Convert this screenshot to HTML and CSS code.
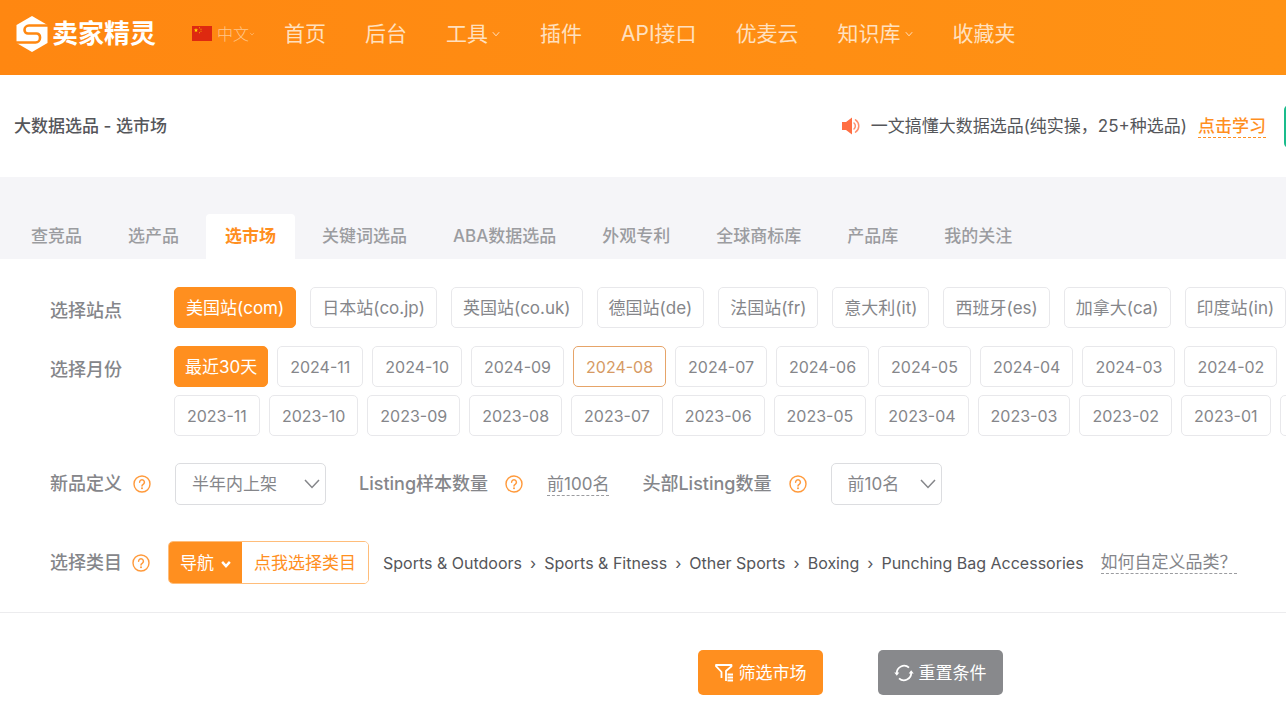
FILE: index.html
```html
<!DOCTYPE html>
<html lang="zh-CN">
<head>
    <meta charset="UTF-8">
    <meta name="viewport" content="width=device-width, initial-scale=1.0">
    <title>选市场 - 卖家精灵</title>
    <link rel="stylesheet" href="styles.css">
</head>
<body>
    <svg class="sprite" aria-hidden="true">
        <symbol id="help" viewBox="0 0 18 18">
            <circle cx="9" cy="9" r="8" fill="none" stroke="currentColor" stroke-width="1.4"/>
            <path d="M6.6 7.2a2.4 2.4 0 1 1 3.6 2.1c-.8.5-1.2.8-1.2 1.7" fill="none" stroke="currentColor" stroke-width="1.5" stroke-linecap="round"/>
            <circle cx="9" cy="13.2" r="1" fill="currentColor"/>
        </symbol>
        <symbol id="caret" viewBox="0 0 10 10">
            <path d="M1.8 3.2L5 6.8l3.2-3.6" fill="none" stroke="currentColor"/>
        </symbol>
        <symbol id="chevron" viewBox="0 0 16 10">
            <path d="M1 1l7 7.5L15 1" fill="none" stroke="currentColor" stroke-width="1.5"/>
        </symbol>
    </svg>

    <header class="header">
        <a class="logo" href="#">
            <svg class="logo-mark" viewBox="0 0 32 36" aria-hidden="true">
                <path d="M16 0L31.5 9v18L16 36 .5 27V9z" fill="#fff"/>
                <path d="M32 9.5H13A4.500 4.500 0 0 0 8.500 14A3.500 3.500 0 0 0 12 17.500H20.500A3.500 3.500 0 0 1 24 21v1A4.500 4.500 0 0 1 19.500 26.500H0" fill="none" stroke="#ff8811" stroke-width="2.6"/>
            </svg>
            <span class="logo-text">卖家精灵</span>
        </a>
        <button class="lang" type="button">
            <svg class="flag" viewBox="0 0 20 15" aria-hidden="true">
                <rect width="20" height="15" fill="#de2910"/>
                <path d="M4 2l.6 1.400 1.500.1-1.200 1 .4 1.500L4 5.200 2.700 6l.4-1.500-1.200-1 1.500-.1z" fill="#ffde00"/>
                <path d="M7 1.200h1v1H7zM8.500 2.800h1v1h-1zM8.500 4.800h1v1h-1zM7 6.200h1v1H7z" fill="#f5a800"/>
            </svg>
            <span>中文</span>
            <svg class="lang-caret" aria-hidden="true"><use href="#caret"/></svg>
        </button>
        <nav class="nav">
            <a href="#">首页</a>
            <a href="#">后台</a>
            <a href="#">工具<svg class="nav-caret" aria-hidden="true"><use href="#caret"/></svg></a>
            <a href="#">插件</a>
            <a href="#">API接口</a>
            <a href="#">优麦云</a>
            <a href="#">知识库<svg class="nav-caret" aria-hidden="true"><use href="#caret"/></svg></a>
            <a href="#">收藏夹</a>
        </nav>
    </header>

    <section class="title-bar">
        <h1>大数据选品 - 选市场</h1>
        <div class="notice">
            <svg class="speaker" viewBox="0 0 20 18" aria-hidden="true">
                <path d="M1 5h4l6-4.500v17L5 13H1z" fill="#ff6f43"/>
                <path d="M13 6a4 4 0 0 1 0 6M14.500 2.800a7.500 7.500 0 0 1 0 12.400" fill="none" stroke="#ff8f6c" stroke-width="1.5" stroke-linecap="round"/>
            </svg>
            <span>一文搞懂大数据选品(纯实操，25+种选品)</span>
            <a class="learn" href="#">点击学习</a>
        </div>
        <button class="side-btn" type="button" aria-label="教程"></button>
    </section>

    <nav class="tabs">
        <a href="#">查竞品</a>
        <a href="#">选产品</a>
        <a class="active" href="#">选市场</a>
        <a href="#">关键词选品</a>
        <a href="#">ABA数据选品</a>
        <a href="#">外观专利</a>
        <a href="#">全球商标库</a>
        <a href="#">产品库</a>
        <a href="#">我的关注</a>
    </nav>

    <main class="filters">
        <div class="row">
            <span class="label">选择站点</span>
            <div class="chips sites">
                <button class="chip selected" type="button">美国站(com)</button>
                <button class="chip" type="button">日本站(co.jp)</button>
                <button class="chip" type="button">英国站(co.uk)</button>
                <button class="chip" type="button">德国站(de)</button>
                <button class="chip" type="button">法国站(fr)</button>
                <button class="chip" type="button">意大利(it)</button>
                <button class="chip" type="button">西班牙(es)</button>
                <button class="chip" type="button">加拿大(ca)</button>
                <button class="chip" type="button">印度站(in)</button>
            </div>
        </div>
        <div class="row months">
            <span class="label">选择月份</span>
            <div class="month-list">
                <div class="chips">
                    <button class="chip selected" type="button">最近30天</button>
                    <button class="chip" type="button">2024-11</button>
                    <button class="chip" type="button">2024-10</button>
                    <button class="chip" type="button">2024-09</button>
                    <button class="chip hovered" type="button">2024-08</button>
                    <button class="chip" type="button">2024-07</button>
                    <button class="chip" type="button">2024-06</button>
                    <button class="chip" type="button">2024-05</button>
                    <button class="chip" type="button">2024-04</button>
                    <button class="chip" type="button">2024-03</button>
                    <button class="chip" type="button">2024-02</button>
                    <button class="chip" type="button">2024-01</button>
                </div>
                <div class="chips">
                    <button class="chip" type="button">2023-11</button>
                    <button class="chip" type="button">2023-10</button>
                    <button class="chip" type="button">2023-09</button>
                    <button class="chip" type="button">2023-08</button>
                    <button class="chip" type="button">2023-07</button>
                    <button class="chip" type="button">2023-06</button>
                    <button class="chip" type="button">2023-05</button>
                    <button class="chip" type="button">2023-04</button>
                    <button class="chip" type="button">2023-03</button>
                    <button class="chip" type="button">2023-02</button>
                    <button class="chip" type="button">2023-01</button>
                    <button class="chip" type="button">2022-12</button>
                </div>
            </div>
        </div>

        <div class="options">
            <div class="option">
                <label for="newItem">新品定义</label>
                <svg class="help" aria-hidden="true"><use href="#help"/></svg>
                <div class="select wide">
                    <select id="newItem"><option>半年内上架</option></select>
                    <svg aria-hidden="true"><use href="#chevron"/></svg>
                </div>
            </div>
            <div class="option sample">
                <span>Listing样本数量</span>
                <svg class="help" aria-hidden="true"><use href="#help"/></svg>
                <a class="dashed" href="#">前100名</a>
            </div>
            <div class="option head">
                <label for="headCount">头部Listing数量</label>
                <svg class="help" aria-hidden="true"><use href="#help"/></svg>
                <div class="select">
                    <select id="headCount"><option>前10名</option></select>
                    <svg aria-hidden="true"><use href="#chevron"/></svg>
                </div>
            </div>
        </div>

        <div class="category">
            <span class="category-label">选择类目</span>
            <svg class="help" aria-hidden="true"><use href="#help"/></svg>
            <div class="picker">
                <button class="picker-nav" type="button">导航<svg aria-hidden="true"><use href="#caret"/></svg></button>
                <button class="picker-choose" type="button">点我选择类目</button>
            </div>
            <div class="crumbs">
                <span>Sports &amp; Outdoors</span><i>›</i>
                <span>Sports &amp; Fitness</span><i>›</i>
                <span>Other Sports</span><i>›</i>
                <span>Boxing</span><i>›</i>
                <span>Punching Bag Accessories</span>
            </div>
            <a class="dashed" href="#">如何自定义品类？</a>
        </div>
    </main>

    <div class="actions">
        <button class="btn" type="button">
            <svg viewBox="0 0 20 20" aria-hidden="true">
                <path d="M7.500 15V9L2 3.200V2h15.500v1.200L12 8v10" fill="none" stroke="#fff" stroke-width="1.8" stroke-linejoin="round"/>
                <path d="M13.500 11.500H19M13.500 14.500H19M13.500 17.500H19" stroke="#fff" stroke-width="1.8"/>
            </svg>
            筛选市场
        </button>
        <button class="btn reset" type="button">
            <svg viewBox="0 0 20 20" aria-hidden="true">
                <path d="M2.800 10.500A7.300 7.300 0 0 1 15 4.700M17.200 9.500A7.300 7.300 0 0 1 5 15.300" fill="none" stroke="#fff" stroke-width="1.8"/>
                <path d="M0.300 9.500h5L2.800 12.700zM14.700 10.500h5L17.200 7.300z" fill="#fff"/>
            </svg>
            重置条件
        </button>
    </div>
</body>
</html>
```
FILE: styles.css
```css
* {
    box-sizing: border-box;
}
body {
    margin: 0;
    overflow-x: hidden;
    background: #fff;
    color: #85868a;
    font-family: Inter, "Noto Sans CJK SC", sans-serif;
    font-size: 17px;
    line-height: 24px;
    white-space: nowrap;
}
a {
    color: inherit;
    text-decoration: none;
}
button,
select {
    font: inherit;
    color: inherit;
    cursor: pointer;
}
svg {
    flex: none;
}
.sprite {
    display: none;
}

/* header */
.header {
    display: flex;
    align-items: center;
    height: 75px;
    padding: 0 16px 8px;
    background: linear-gradient(90deg, #ff8711, #ff9214);
}
.logo {
    display: flex;
    align-items: center;
    gap: 4px;
    color: #fff;
}
.logo-mark {
    width: 32px;
    height: 36px;
}
.logo-text {
    font-size: 26px;
    font-weight: 700;
}
.lang {
    display: flex;
    align-items: center;
    margin-left: 36px;
    padding: 0;
    border: 0;
    background: none;
    color: #ffc68a;
    font-size: 16px;
    font-weight: 300;
}
.flag {
    width: 20px;
    height: 15px;
    margin-right: 5px;
}
.lang-caret {
    width: 6px;
    height: 6px;
}
.nav {
    display: flex;
    gap: 39px;
    margin-left: 29px;
    color: #ffe0bf;
    font-size: 21px;
}
.nav-caret {
    width: 10px;
    height: 10px;
    margin-left: 3px;
    vertical-align: 2px;
}

/* page title and notice */
.title-bar {
    display: flex;
    align-items: center;
    height: 102px;
    padding-left: 14px;
    overflow: hidden;
    color: #55565a;
}
.title-bar h1 {
    margin: 0;
    font-size: 17px;
    font-weight: 500;
}
.notice {
    display: flex;
    align-items: center;
    margin-left: auto;
}
.speaker {
    width: 20px;
    height: 18px;
    margin-right: 10px;
}
.learn {
    margin-left: 11px;
    border-bottom: 1px dashed #ff8f1f;
    color: #ff8f1f;
    font-weight: 500;
    line-height: 22px;
}
.side-btn {
    flex: none;
    width: 40px;
    height: 43px;
    margin: 0 -38px 0 18px;
    border: 0;
    border-radius: 5px;
    background: #1abc8c;
}

/* tabs */
.tabs {
    display: flex;
    align-items: flex-end;
    gap: 8px;
    height: 82px;
    padding: 0 12px;
    background: #f5f5f8;
    color: #9b9ca0;
    font-weight: 500;
}
.tabs a {
    height: 45px;
    padding: 0 19px;
    line-height: 44px;
}
.tabs .active {
    border-radius: 4px 4px 0 0;
    background: #fff;
    color: #ff8f1f;
    font-weight: 700;
}

/* filters */
.filters {
    padding: 28px 0;
    border-bottom: 1px solid #ececee;
}
.row {
    display: flex;
    padding-left: 50px;
    overflow: hidden;
}
.label {
    flex: none;
    width: 124px;
    padding-top: 12px;
    font-size: 18px;
    font-weight: 500;
}
.chips {
    display: flex;
    gap: 9px;
}
.sites {
    gap: 14px;
}
.chip {
    flex: none;
    height: 41px;
    padding: 0 11px;
    border: 1px solid #e8e8eb;
    border-radius: 5px;
    background: #fff;
}
.chip.selected {
    border-color: #ff8f1f;
    background: #ff8f1f;
    color: #fff;
}
.chip.hovered {
    border-color: #e6a469;
    color: #d69a64;
}
.months {
    margin-top: 18px;
}
.month-list {
    display: grid;
    gap: 8px;
}
.month-list .chip {
    padding: 0 12px;
    font-size: 16px;
}
.month-list .selected {
    padding: 0 10px;
    font-size: 17px;
}
.help {
    width: 18px;
    height: 18px;
    color: #ff9a3c;
}
.options,
.category {
    display: flex;
    align-items: center;
    padding-left: 50px;
}
.options {
    gap: 33px;
    margin-top: 27px;
}
.option {
    display: flex;
    align-items: center;
    font-size: 18px;
    font-weight: 500;
}
.option .help {
    margin: 0 24px 0 11px;
}
.sample .help,
.head .help {
    margin-left: 17px;
}
.select {
    position: relative;
    width: 111px;
}
.select.wide {
    width: 151px;
}
.select select {
    appearance: none;
    width: 100%;
    height: 42px;
    padding: 0 16px;
    border: 1px solid #dcdde0;
    border-radius: 5px;
    background: #fff;
    font-size: 17px;
    font-weight: 400;
}
.select svg {
    position: absolute;
    top: 16px;
    right: 6px;
    width: 16px;
    height: 10px;
    pointer-events: none;
}
.dashed {
    border-bottom: 1px dashed #9b9ca0;
    font-size: 17px;
    font-weight: 400;
    line-height: 22px;
}
.category {
    margin-top: 36px;
}
.category-label {
    font-size: 18px;
    font-weight: 500;
}
.category .help {
    margin: 0 18px 0 10px;
}
.picker {
    display: flex;
    height: 43px;
    overflow: hidden;
    border: 1px solid #ffbd7a;
    border-radius: 5px;
}
.picker button {
    padding: 0 12px;
    border: 0;
    background: #fff;
    color: #ff8f1f;
}
.picker .picker-nav {
    padding: 0 10px 0 11px;
    background: #ff8f1f;
    color: #fff;
}
.picker-nav svg {
    width: 12px;
    height: 12px;
    margin-left: 6px;
    stroke-width: 2;
    vertical-align: -1px;
}
.crumbs {
    display: flex;
    gap: 8px;
    margin: 0 17px 0 14px;
    color: #55565a;
    font-size: 16px;
}
.crumbs i {
    font-style: normal;
}

/* actions */
.actions {
    display: flex;
    justify-content: center;
    gap: 55px;
    padding: 37px 0 22px 414px;
}
.btn {
    display: flex;
    align-items: center;
    gap: 5px;
    height: 45px;
    padding: 0 16px;
    border: 0;
    border-radius: 5px;
    background: #ff8f1f;
    color: #fff;
}
.btn svg {
    width: 20px;
    height: 20px;
}
.btn.reset {
    background: #88898c;
}
```
